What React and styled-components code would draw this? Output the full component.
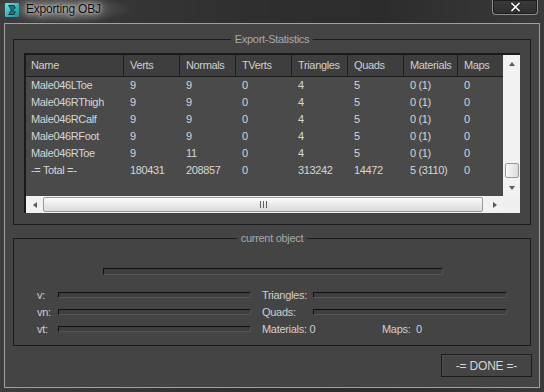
import React from 'react';
import styled, { createGlobalStyle } from 'styled-components';

const Global = createGlobalStyle`
  html, body { margin: 0; padding: 0; background: #2a2a2a; }
  body { font-family: "Liberation Sans", Arial, sans-serif; }
  * { box-sizing: border-box; }
`;

const Win = styled.div`
  width: 544px;
  height: 392px;
  overflow: hidden;
  display: flex;
  flex-direction: column;
  background: linear-gradient(90deg, #3c3c3c 0%, #2f2f2f 45%, #2c2c2c 70%, #3a3a3a 100%);
`;

const TitleBar = styled.div`
  height: 23px;
  flex: none;
  display: flex;
  align-items: flex-start;
  padding-left: 5px;
  background: radial-gradient(ellipse 70px 14px at 62px 9px, rgba(150,150,150,.55), rgba(150,150,150,0) 100%);
`;

const AppIcon = styled.svg`
  width: 14px;
  height: 14px;
  margin-top: 3px;
  flex: none;
`;

const Title = styled.span`
  margin-left: 7px;
  margin-top: 2px;
  font-size: 12px;
  line-height: 15px;
  letter-spacing: -0.2px;
  color: #0c0c0c;
  text-shadow: 0 0 3px rgba(215,215,215,1), 0 0 7px rgba(200,200,200,.95), 0 0 12px rgba(190,190,190,.9), 0 0 18px rgba(180,180,180,.8);
`;

const CloseBtn = styled.div`
  margin-left: auto;
  margin-right: 6px;
  width: 46px;
  height: 15px;
  border: 1px solid #8e8e8e;
  border-top: none;
  border-radius: 0 0 4px 4px;
  background: linear-gradient(180deg, #3a3a3a, #2e2e2e);
  box-shadow: inset 0 0 0 1px #1c1c1c;
  display: flex;
  align-items: center;
  justify-content: center;
`;

const Body = styled.div`
  margin: 0 4px;
  width: 536px;
  height: 365px;
  flex: none;
  border: 1px solid #a0a0a0;
  background: #444444;
  padding: 15px 8px 0 8px;
  display: flex;
  flex-direction: column;
`;

const Group = styled.div`
  position: relative;
  height: ${p => p.$h}px;
  margin-top: ${p => p.$mt || 0}px;
  border: 1px solid #1b1b1b;
  flex: none;
`;

const Legend = styled.span`
  position: absolute;
  top: -7px;
  left: 50%;
  transform: translateX(-50%);
  padding: 0 4px;
  background: #444444;
  color: #a9a9a9;
  font-size: 11px;
  line-height: 13px;
  letter-spacing: -0.3px;
  white-space: nowrap;
`;

const StatsInner = styled.div`
  padding: 13px 10px 0 10px;
`;

const ListView = styled.div`
  height: 160px;
  border-top: 2px solid #1a1a1a;
  border-left: 2px solid #1a1a1a;
  display: grid;
  grid-template-columns: 1fr 17px;
  grid-template-rows: 1fr 17px;
  background: #4a4a4a;
`;

const Table = styled.div`
  overflow: hidden;
  font-size: 11px;
  letter-spacing: -0.35px;
`;

const HeaderRow = styled.div`
  display: flex;
  height: 22px;
  background: #3e3e3e;
  border-bottom: 1px solid #1c1c1c;
`;

const HeadCell = styled.div`
  flex: none;
  width: ${p => p.$w}px;
  padding-left: ${p => (p.$first ? 5 : 6)}px;
  line-height: 21px;
  color: #cfcfcf;
  border-right: ${p => (p.$last ? 'none' : '1px solid #1e1e1e')};
  white-space: nowrap;
  overflow: hidden;
`;

const Row = styled.div`
  display: flex;
  height: 17px;
`;

const Cell = styled.div`
  flex: none;
  width: ${p => p.$w}px;
  padding-left: ${p => (p.$first ? 5 : 6)}px;
  line-height: 17px;
  color: #d6d6d6;
  white-space: nowrap;
  overflow: hidden;
`;

const VScroll = styled.div`
  background: #f2f2f2;
  display: flex;
  flex-direction: column;
  align-items: center;
`;

const HScroll = styled.div`
  background: #f2f2f2;
  display: flex;
  align-items: center;
`;

const Corner = styled.div`
  background: #f0f0f0;
`;

const ArrowBox = styled.div`
  flex: none;
  width: 17px;
  height: 17px;
  display: flex;
  align-items: center;
  justify-content: center;
`;

const Tri = styled.div`
  width: 0;
  height: 0;
  border-style: solid;
  ${p => p.$dir === 'up' && 'border-width: 0 3.5px 4px 3.5px; border-color: transparent transparent #5a5a5a transparent;'}
  ${p => p.$dir === 'down' && 'border-width: 4px 3.5px 0 3.5px; border-color: #5a5a5a transparent transparent transparent;'}
  ${p => p.$dir === 'left' && 'border-width: 3.5px 4px 3.5px 0; border-color: transparent #5a5a5a transparent transparent;'}
  ${p => p.$dir === 'right' && 'border-width: 3.5px 0 3.5px 4px; border-color: transparent transparent transparent #5a5a5a;'}
`;

const VThumb = styled.div`
  margin-top: auto;
  margin-bottom: 1px;
  width: 14px;
  height: 15px;
  border: 1px solid #9a9a9a;
  border-radius: 2px;
  background: linear-gradient(90deg, #fdfdfd, #e9e9e9 50%, #dcdcdc);
`;

const HThumb = styled.div`
  flex: 1;
  height: 15px;
  margin-right: 3px;
  border: 1px solid #9a9a9a;
  border-radius: 2px;
  background: linear-gradient(180deg, #fdfdfd, #ececec 45%, #dadada);
  display: flex;
  align-items: center;
  justify-content: center;
`;

const Grip = styled.div`
  width: 7px;
  height: 7px;
  background: repeating-linear-gradient(90deg, #5e5e5e 0 1px, transparent 1px 3px);
`;

const ObjInner = styled.div`
  padding-top: 29px;
`;

const Sunken = styled.div`
  height: ${p => p.$h}px;
  border-top: 1px solid #0f0f0f;
  border-left: 1px solid #0f0f0f;
  border-right: 1px solid #555;
  border-bottom: 1px solid #555;
  background: #3f3f3f;
`;

const Progress = styled(Sunken)`
  margin-left: 89px;
  width: 340px;
`;

const FieldGrid = styled.div`
  margin-top: 11px;
  padding-left: 23px;
  display: grid;
  grid-template-columns: 21px 193px 11px 51px 194px;
  grid-auto-rows: 17px;
  align-items: center;
  font-size: 11px;
  letter-spacing: -0.3px;
  color: #cfcfcf;
`;

const Label = styled.span`
  white-space: nowrap;
  grid-column: ${p => p.$col};
`;

const Bar = styled(Sunken)`
  grid-column: ${p => p.$col};
`;

const InfoLine = styled.div`
  grid-column: 4 / 6;
  display: flex;
  white-space: nowrap;
`;

const InfoItem = styled.span`
  width: ${p => p.$w}px;
  flex: none;
`;

const DoneButton = styled.div`
  align-self: flex-end;
  margin-top: 8px;
  margin-right: -1px;
  width: 91px;
  height: 23px;
  border: 1px solid #1c1c1c;
  box-shadow: inset 1px 1px 0 #4e4e4e;
  background: #444;
  color: #d4d4d4;
  font-size: 12px;
  letter-spacing: -0.2px;
  display: flex;
  align-items: center;
  justify-content: center;
`;

const cols = [
  { k: 'Name', w: 98 },
  { k: 'Verts', w: 56 },
  { k: 'Normals', w: 56 },
  { k: 'TVerts', w: 56 },
  { k: 'Triangles', w: 56 },
  { k: 'Quads', w: 56 },
  { k: 'Materials', w: 54 },
  { k: 'Maps', w: 45 },
];

const rows = [
  ['Male046LToe', '9', '9', '0', '4', '5', '0 (1)', '0'],
  ['Male046RThigh', '9', '9', '0', '4', '5', '0 (1)', '0'],
  ['Male046RCalf', '9', '9', '0', '4', '5', '0 (1)', '0'],
  ['Male046RFoot', '9', '9', '0', '4', '5', '0 (1)', '0'],
  ['Male046RToe', '9', '11', '0', '4', '5', '0 (1)', '0'],
  ['-= Total =-', '180431', '208857', '0', '313242', '14472', '5 (3110)', '0'],
];

export default function App() {
  return (
    <>
      <Global />
      <Win>
        <TitleBar>
          <AppIcon viewBox="0 0 14 14">
            <defs>
              <linearGradient id="ig" x1="0" y1="0" x2="1" y2="1">
                <stop offset="0" stopColor="#6fe0e0" />
                <stop offset="1" stopColor="#1a8a96" />
              </linearGradient>
            </defs>
            <rect x="0" y="0" width="14" height="14" rx="1" fill="url(#ig)" />
            <path d="M3 2 L9 2 L11 5 L8 7 L11 9 L9 12 L3 12 L6 7 Z" fill="#0f3a44" />
            <path d="M4.5 3 L8.5 3 L9.8 5 L7 7 L9.8 9 L8.5 11 L4.5 11 L7 7 Z" fill="#2aa9b4" opacity="0.55" />
          </AppIcon>
          <Title>Exporting OBJ</Title>
          <CloseBtn>
            <svg width="11" height="10" viewBox="0 0 11 10">
              <path d="M2 1.5 L9 8.5 M9 1.5 L2 8.5" stroke="#222" strokeWidth="3.2" strokeLinecap="square" />
              <path d="M2 1.5 L9 8.5 M9 1.5 L2 8.5" stroke="#f4f4f4" strokeWidth="1.7" strokeLinecap="square" />
            </svg>
          </CloseBtn>
        </TitleBar>
        <Body>
          <Group $h={186}>
            <Legend>Export-Statistics</Legend>
            <StatsInner>
              <ListView>
                <Table>
                  <HeaderRow>
                    {cols.map((c, i) => (
                      <HeadCell key={c.k} $w={c.w} $first={i === 0} $last={i === cols.length - 1}>
                        {c.k}
                      </HeadCell>
                    ))}
                  </HeaderRow>
                  {rows.map((r, ri) => (
                    <Row key={ri}>
                      {r.map((v, ci) => (
                        <Cell key={ci} $w={cols[ci].w} $first={ci === 0}>
                          {v}
                        </Cell>
                      ))}
                    </Row>
                  ))}
                </Table>
                <VScroll>
                  <ArrowBox><Tri $dir="up" /></ArrowBox>
                  <VThumb />
                  <ArrowBox><Tri $dir="down" /></ArrowBox>
                </VScroll>
                <HScroll>
                  <ArrowBox><Tri $dir="left" /></ArrowBox>
                  <HThumb><Grip /></HThumb>
                  <ArrowBox><Tri $dir="right" /></ArrowBox>
                </HScroll>
                <Corner />
              </ListView>
            </StatsInner>
          </Group>
          <Group $h={108} $mt={13}>
            <Legend>current object</Legend>
            <ObjInner>
              <Progress $h={7} />
              <FieldGrid>
                <Label $col={1}>v:</Label>
                <Bar $h={6} $col={2} />
                <Label $col={4}>Triangles:</Label>
                <Bar $h={6} $col={5} />
                <Label $col={1}>vn:</Label>
                <Bar $h={6} $col={2} />
                <Label $col={4}>Quads:</Label>
                <Bar $h={6} $col={5} />
                <Label $col={1}>vt:</Label>
                <Bar $h={6} $col={2} />
                <InfoLine>
                  <InfoItem $w={120}>Materials: 0</InfoItem>
                  <InfoItem $w={60}>Maps:&nbsp; 0</InfoItem>
                </InfoLine>
              </FieldGrid>
            </ObjInner>
          </Group>
          <DoneButton>-= DONE =-</DoneButton>
        </Body>
      </Win>
    </>
  );
}
